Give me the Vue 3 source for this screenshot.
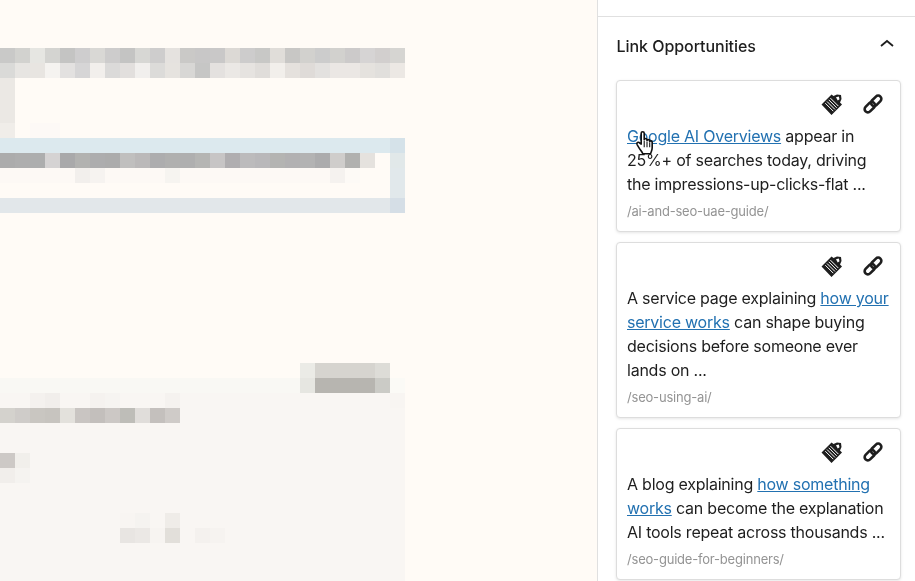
<template>
  <div class="screen">
    <div class="canvas">
      <div class="mosaic">
        <template v-for="(row, r) in mosaicRows" :key="r">
          <i
            v-for="c in 27"
            :key="c"
            class="cell"
            :style="{ background: row.cells[c - 1] || row.fill }"
          ></i>
        </template>
      </div>
    </div>
    <aside class="sidebar">
      <div class="top-strip"></div>
      <section class="panel">
        <header class="panel-head">
          <h2>Link Opportunities</h2>
          <svg class="chevron" width="24" height="24" viewBox="0 0 24 24">
            <path d="M6 15 12 10l6 5" fill="none" stroke="#1e1e1e" stroke-width="1.800" />
          </svg>
        </header>
        <article v-for="card in cards" :key="card.slug" class="card">
          <div class="actions">
            <svg class="icon" width="24" height="24" viewBox="0 0 24 24">
              <path d="M1.500 12.500 11.500 2.500l2 1.500 3.500-1.500 4 .5.500 4-1.500 3.500 2 2L11.500 23z" fill="#1e1e1e" />
              <path d="M16 5.200l2.800-.7.700 2.800-1.800 1.200z" fill="#fff" />
              <path
                d="M7 9.500 15 17.500M8.700 7.800 16.700 15.800M5.300 11.200 13.300 19.200M10.400 6.100 18.400 14.100"
                stroke="#fff"
                stroke-width="1"
                fill="none"
              />
            </svg>
            <svg class="icon" width="24" height="24" viewBox="0 0 24 24">
              <g fill="none" stroke="#1e1e1e" stroke-width="2.600" transform="rotate(-45 12 12)">
                <rect x="1.500" y="8.800" width="12" height="6.400" rx="3.200" />
                <rect x="10.500" y="8.800" width="12" height="6.400" rx="3.200" />
              </g>
            </svg>
          </div>
          <p class="excerpt">
            {{ card.before }}<a href="#" class="link">{{ card.link }}</a>{{ card.after }}
          </p>
          <div class="slug">{{ card.slug }}</div>
        </article>
      </section>
    </aside>
    <svg class="cursor" width="23" height="28" viewBox="0 0 20 26">
      <path
        d="M6 14V4c0-2 2.800-2 2.800 0v6c0-1.500 2.600-1.500 2.600 0v1c0-1.500 2.500-1.500 2.500 0v1c0-1.300 2.300-1.300 2.300.3v5.200c0 2.500-1 3.500-1.500 5.500H7.500c-.8-2-2-3-3.500-5.500L2.200 14.500c-1-1.800 1.300-3 2.400-1.500z"
        fill="#fff"
        stroke="#111"
        stroke-width="1.500"
        stroke-linejoin="round"
      />
      <path d="M8.800 11v6M11.400 12v5M13.900 13v4" stroke="#111" stroke-width="1" fill="none" />
    </svg>
  </div>
</template>

<script setup>
// rows of the blurred page area, 15px blocks starting at y=48
const BG = 'transparent'
const list = (start, colors) =>
  Object.fromEntries(colors.map((c, i) => [start + i, c]))

const blank = { fill: BG, cells: {} }
const mosaicRows = [
  {
    fill: BG,
    cells: list(0, [
      '#c9c9c8', '#d2d2cf', '#e6e6e2', '#d4d4d1', '#c4c4c3', '#cecdce', '#d9d8d5', '#cdcccc', '#c4c4c3',
      '#d7d7d4', '#cecdcd', '#e5e2df', '#cac9c7', '#c8c7c7', '#c9c8c8', '#dcd9d5', '#cdcccc', '#c8c8c6',
      '#e0ddd9', '#c8c7c5', '#d2d1ce', '#cccccc', '#d2d1ce', '#cccaca', '#d6d4d4', '#d2cfce', '#d6d5d2',
    ]),
  },
  {
    fill: BG,
    cells: list(0, [
      '#dadad8', '#e7e5e2', '#e8e5e1', '#f5f3f0', '#e3e1e0', '#d6d5d6', '#f2efec', '#dbdad9', '#e2dfdd',
      '#f1efed', '#dcdbd9', '#e6e3df', '#d8d7d5', '#c6c6c5', '#e4e1df', '#ebe8e5', '#e6e3e0', '#e0ddda',
      '#f2efeb', '#e5e1dd', '#dfdbd8', '#e3e1df', '#ebe7e4', '#ebe7e4', '#e5e2de', '#e1dfdc', '#ece8e4',
    ]),
  },
  { fill: BG, cells: { 0: '#ebe8e4' } },
  { fill: BG, cells: { 0: '#ebe8e4' } },
  { fill: BG, cells: { 0: '#ebe8e4' } },
  { fill: BG, cells: { 0: '#f0ede9', 2: '#fdf9f6', 3: '#fdf9f6' } },
  { fill: '#dce9ee', cells: { 26: '#d5e2e9' } },
  {
    fill: BG,
    cells: list(0, [
      '#acacac', '#aeaeae', '#adaeae', '#d5d3d3', '#a9a9aa', '#b2b2b0', '#adadae', '#acacac', '#c0bfbe',
      '#bbb9b9', '#adadae', '#b0b0af', '#afafaf', '#b5b5b3', '#c7c5c5', '#b0aeb0', '#bcbbbc', '#b9b8ba',
      '#b4b4b2', '#b2b1b2', '#b3b3b3', '#acacad', '#cfcdcb', '#b1b1af', '#e5e2de', BG, '#e1e8e9',
    ]),
  },
  {
    fill: '#fdf9f5',
    cells: { 5: '#f2efec', 6: '#f6f3f0', 11: '#f6f4f0', 22: '#f5f2ef', 23: '#fdfaf6', 24: BG, 25: BG, 26: '#e1e8eb' },
  },
  { fill: BG, cells: { 26: '#e1e8eb' } },
  { fill: '#e2e7ea', cells: { 26: '#d5dee6' } },
  ...Array.from({ length: 10 }, () => blank),
  { fill: BG, cells: { 20: '#ebebe6', 21: '#d6d4cf', 22: '#d6d4cf', 23: '#d6d4cf', 24: '#d6d4cf', 25: '#dddcd7' } },
  {
    fill: '#f9f8f4',
    cells: { 20: '#e6e6e1', 21: '#b7b5b0', 22: '#b7b5b0', 23: '#b7b5b0', 24: '#b7b5b0', 25: '#cbcbc6', 26: '#fbfaf6' },
  },
  {
    fill: '#f9f6f3',
    cells: { 2: '#f4f1ee', 3: '#f1eeeb', 6: '#f5f2ef', 7: '#f6f4f1', 11: '#f5f2ef', 26: '#f8f5f2' },
  },
  {
    fill: '#f9f6f3',
    cells: list(0, [
      '#d4d2cd', '#cfccc9', '#c9c6c1', '#c7c4bf', '#e3e1dc', '#c9c5c2',
      '#c3bfbc', '#ccc8c5', '#bebdb8', '#e0ddda', '#c4c0bd', '#cfcbc8',
    ]),
  },
  { fill: '#f9f6f3', cells: {} },
  { fill: '#f9f6f3', cells: {} },
  { fill: '#f9f6f3', cells: { 0: '#cdc9c6', 1: '#f1efeb' } },
  { fill: '#f9f6f3', cells: { 0: '#f1eeeb', 1: '#f5f3f0' } },
  { fill: '#f9f6f3', cells: {} },
  { fill: '#f9f6f3', cells: {} },
  { fill: '#f9f6f3', cells: { 8: '#f8f5f2', 9: '#f5f3f0', 11: '#efece8' } },
  { fill: '#f9f6f3', cells: { 8: '#e8e5e2', 9: '#ebe8e5', 10: '#f7f4f1', 11: '#e2dfda', 13: '#f4f1ee', 14: '#f6f3f0' } },
  { fill: '#f9f6f3', cells: {} },
  { fill: '#f9f6f3', cells: {} },
  { fill: '#f9f6f3', cells: {} },
]

const cards = [
  {
    before: '',
    link: 'Google AI Overviews',
    after: ' appear in 25%+ of searches today, driving the impressions-up-clicks-flat ...',
    slug: '/ai-and-seo-uae-guide/',
  },
  {
    before: 'A service page explaining ',
    link: 'how your service works',
    after: ' can shape buying decisions before someone ever lands on ...',
    slug: '/seo-using-ai/',
  },
  {
    before: 'A blog explaining ',
    link: 'how something works',
    after: ' can become the explanation AI tools repeat across thousands ...',
    slug: '/seo-guide-for-beginners/',
  },
]
</script>

<style scoped>
.screen {
  position: relative;
  display: flex;
  width: 915px;
  height: 581px;
  overflow: hidden;
  font-family: Inter, 'Liberation Sans', sans-serif;
  color: #1e1e1e;
}

.canvas {
  flex: 0 0 597px;
  padding-top: 48px;
  background: #fffbf6;
}

.mosaic {
  display: grid;
  grid-template-columns: repeat(27, 15px);
  grid-auto-rows: 15px;
}

.cell {
  display: block;
}

.sidebar {
  flex: 1;
  background: #fff;
  border-left: 1px solid #e0e0e0;
  filter: blur(0.3px);
}

.top-strip {
  height: 16px;
  border-bottom: 1px solid #e0e0e0;
}

.panel {
  padding: 0 14px 0 18px;
}

.panel-head {
  display: flex;
  align-items: center;
  justify-content: space-between;
  height: 63px;
}

.panel-head h2 {
  margin: 0;
  font-size: 16px;
  font-weight: 500;
  line-height: 24px;
  letter-spacing: -0.05px;
  position: relative;
  top: -3px;
  left: 0.5px;
}

.chevron {
  margin-right: 2px;
  position: relative;
  top: -6px;
}

.card {
  box-sizing: border-box;
  margin-bottom: 10px;
  padding: 11px 8px 12px 10px;
  background: #fff;
  border: 1px solid #ddd;
  border-radius: 4px;
  box-shadow: 0 1px 3px rgba(0, 0, 0, 0.1);
}

.actions {
  display: flex;
  justify-content: flex-end;
  gap: 17px;
  height: 24px;
  margin-bottom: 8px;
  padding-right: 7px;
}

.icon {
  display: block;
}

.excerpt {
  margin: 0 0 7px;
  font-size: 16px;
  line-height: 24px;
  letter-spacing: -0.23px;
  color: #1e1e1e;
}

.link {
  color: #2271b1;
  text-decoration: underline;
}

.slug {
  font-size: 13px;
  line-height: 16px;
  letter-spacing: -0.2px;
  color: #949494;
}

.cursor {
  position: absolute;
  left: 634px;
  top: 129px;
}
</style>
